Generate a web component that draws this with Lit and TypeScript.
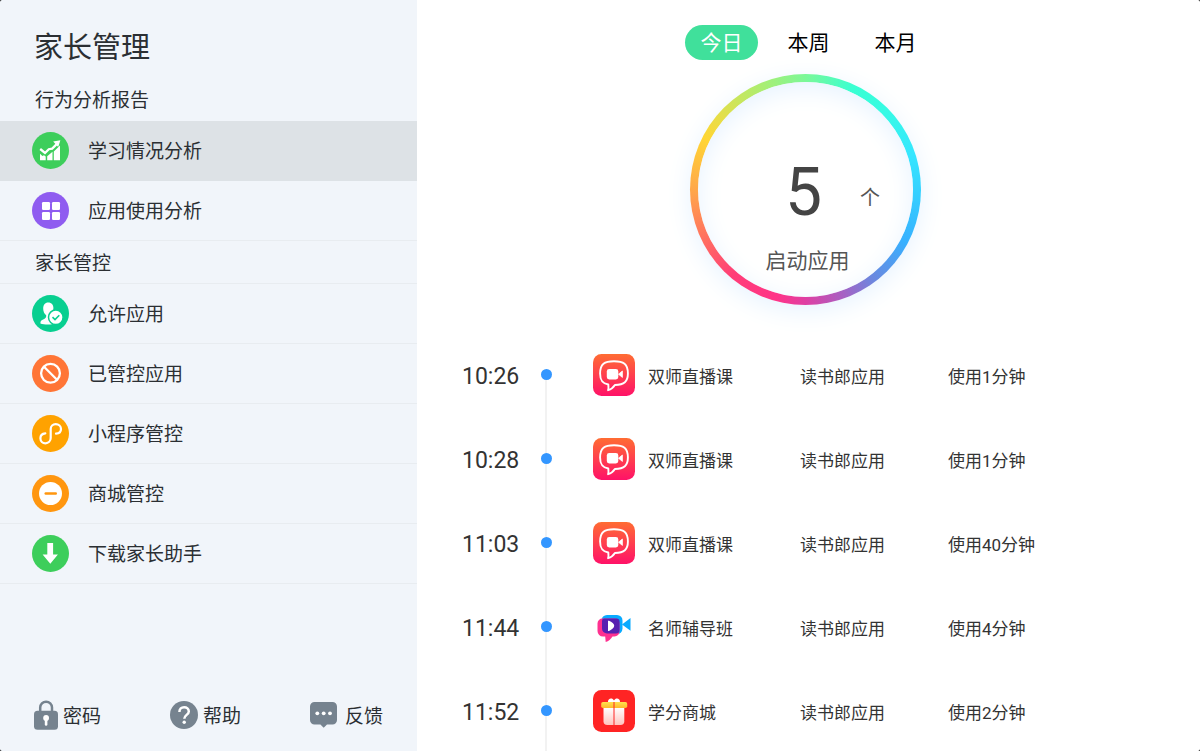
import { LitElement, html, css, svg } from 'lit';
import { customElement, state } from 'lit/decorators.js';
import { classMap } from 'lit/directives/class-map.js';

const menuGlyphs: Record<string, unknown> = {
  study: svg`<circle cx="18.5" cy="18.5" r="18.5" fill="#3dce5b"/>
    <path d="M8 21.8L10.4 24l1.600-.8 1.700 1.400V28.300H8zM15.200 24.200l5.300-4.400V28.300h-5.300zM21.800 19.600l6.200-6V28.300h-6.200z" fill="#fff"/>
    <path d="M8.200 17l4.800 4 3.800-3.800 3.400-.6 5-5" fill="none" stroke="#fff" stroke-width="2.300"/>
    <path d="M21.200 9.600l7.200-1.400-2.200 6.800z" fill="#fff"/>`,
  apps: svg`<circle cx="18.5" cy="18.5" r="18.5" fill="#8f5cf0"/>
    <g fill="#fff"><rect x="10" y="10" width="8" height="8" rx="1.3"/><rect x="20" y="10" width="8" height="8" rx="1.3"/>
    <rect x="10" y="20" width="8" height="8" rx="1.3"/><rect x="20" y="20" width="8" height="8" rx="1.3"/></g>`,
  allow: svg`<circle cx="18.5" cy="18.5" r="18.5" fill="#08cf90"/>
    <path d="M16.2 7.5c3.4 0 5.2 2.3 5.2 5.6 0 2.6-1 4.7-2.4 6 0 2.2.6 2.8 2 3.4V29c-4.200.9-9.500.6-12.600-.6-.3-2.600 1.600-3.800 3.800-4.500 1.500-.5 2.200-1.600 2-3.600-1.900-1.400-3-4.200-3-6.600 0-3.800 1.700-6.200 5-6.200z" fill="#fff"/>
    <circle cx="23.800" cy="22.300" r="7.300" fill="#fff" stroke="#08cf90" stroke-width="1.500"/>
    <path d="M20.500 22.200l2.500 2.400 4.300-4.300" fill="none" stroke="#08cf90" stroke-width="1.600"/>`,
  blocked: svg`<circle cx="18.5" cy="18.5" r="18.5" fill="#ff7536"/>
    <circle cx="18.5" cy="18.300" r="9.400" fill="none" stroke="#fff" stroke-width="2.300"/>
    <path d="M12 11.800l13 13" stroke="#fff" stroke-width="2.300"/>`,
  mini: svg`<circle cx="18.5" cy="18.5" r="18.5" fill="#ffa200"/>
    <path d="M13.300 18.400C10.200 18.700 8.400 20.800 8.400 23.300c0 2.900 2.300 5 5.100 5s5.200-2.200 5.200-5.200v-9.200c0-2.800 2.200-4.800 5-4.800 3 0 5.300 2.100 5.300 4.800 0 2.600-1.900 4.500-5 4.800" fill="none" stroke="#fff" stroke-width="2.200" stroke-linecap="round"/>`,
  mall: svg`<circle cx="18.5" cy="18.5" r="18.5" fill="#ff960f"/>
    <circle cx="18.500" cy="18.500" r="11.500" fill="#fff"/>
    <rect x="12.500" y="17.200" width="12.500" height="2.600" rx="1.200" fill="#ff960f"/>`,
  download: svg`<circle cx="18.5" cy="18.5" r="18.5" fill="#3dce5b"/>
    <path d="M15.300 8h5.800v11.600h4.800l-7.600 9.200-7.700-9.200h4.700z" fill="#fff"/>`,
};

const footGlyphs: Record<string, unknown> = {
  lock: svg`<svg width="24" height="30" viewBox="0 0 24 30" aria-hidden="true">
    <path d="M6.200 12V7.600a5.900 5.900 0 0 1 11.800 0V12" fill="none" stroke="#76838f" stroke-width="2.500"/>
    <rect x="0" y="10.800" width="24" height="19" rx="3.500" fill="#76838f"/>
    <circle cx="12.100" cy="18" r="2.900" fill="#fff"/><path d="M10.800 18h2.600v6.500a1.300 1.300 0 0 1-2.600 0z" fill="#fff"/></svg>`,
  help: svg`<svg width="28" height="28" viewBox="0 0 28 28" aria-hidden="true">
    <circle cx="14" cy="14" r="14" fill="#76838f"/>
    <path d="M9.400 11c0-3 2-4.700 4.700-4.700s4.700 1.700 4.700 4.200c0 3.500-4.500 3.300-4.500 7.200" fill="none" stroke="#fff" stroke-width="2.500"/>
    <circle cx="14.200" cy="21.300" r="1.700" fill="#fff"/></svg>`,
  chat: svg`<svg width="27" height="26" viewBox="0 0 27 26" aria-hidden="true">
    <path d="M4.500 0h18A4.500 4.500 0 0 1 27 4.500v13.500a4.500 4.500 0 0 1-4.500 4.500h-5.500l-3.300 3.300-3.300-3.300H4.500A4.500 4.500 0 0 1 0 18V4.500A4.500 4.500 0 0 1 4.500 0z" fill="#76838f"/>
    <g fill="#fff"><circle cx="7.300" cy="11.300" r="1.900"/><circle cx="13.700" cy="11.300" r="1.900"/><circle cx="20" cy="11.300" r="1.900"/></g></svg>`,
};

const appGlyphs: Record<string, unknown> = {
  live: svg`<defs><linearGradient id="live" x1="0" y1="0" x2="0" y2="1"><stop offset="0" stop-color="#ff6c33"/><stop offset="1" stop-color="#ff1268"/></linearGradient></defs>
    <rect width="42" height="42" rx="8.500" fill="url(#live)"/>
    <path d="M21 7.200c9.500 0 13.900 2.600 13.900 12.300 0 8.200-3.700 11.200-13 11.500-1.500 2.400-4 4.400-6.800 5.200.5-2 .5-3.600.2-5.700C9 29.400 7.100 26 7.100 19.500 7.100 9.800 11.500 7.200 21 7.200z" fill="none" stroke="#fff" stroke-width="1.900" stroke-linejoin="round"/>
    <rect x="13.800" y="15" width="11.500" height="10.400" rx="2.400" fill="#fff"/><path d="M25.500 20.200l3.900-3.200v6.400z" fill="#fff" stroke="#fff" stroke-width=".8" stroke-linejoin="round"/>`,
  tutor: svg`<rect x="8.500" y="9" width="21" height="19" rx="5.500" fill="#08aaff"/>
    <path d="M29 18.500l8.500-6.500v12.700z" fill="#08aaff"/>
    <path d="M9.500 12.500h12.500a4.500 4.500 0 0 1 4.500 4.500v8.500a5 5 0 0 1-5 5h-2c-1.500 2.500-4 4.800-6.800 5.500l-.5-5.500H10a5.500 5.500 0 0 1-5.500-5.500v-7.500a5 5 0 0 1 5-5z" fill="#ff3190"/>
    <path d="M11 12.500h12.500a3 3 0 0 1 3 3v8.500a3.500 3.500 0 0 1-3.500 3.500h-9a5 5 0 0 1-5-5v-7.500a2.500 2.500 0 0 1 2-2.500z" fill="#5720b0"/>
    <path d="M15 14.800h1c3 1.400 5.200 2.800 5.200 5s-2.200 3.700-5.200 5.200h-1z" fill="#fff"/>`,
  gift: svg`<defs><linearGradient id="gift" x1="0" y1="0" x2="0" y2="1"><stop offset="0" stop-color="#fff"/><stop offset="1" stop-color="#ffc4be"/></linearGradient>
    <linearGradient id="lid" x1="0" y1="0" x2="0" y2="1"><stop offset="0" stop-color="#ffe14f"/><stop offset="1" stop-color="#ffb92c"/></linearGradient></defs>
    <rect width="42" height="42" rx="8.500" fill="#ff2424"/>
    <path d="M10.500 17.500h20.800v13.700a3.800 3.800 0 0 1-3.800 3.800H14.300a3.800 3.800 0 0 1-3.800-3.800z" fill="url(#gift)"/>
    <path d="M15 12c-.3-4 4.500-4.700 6-1.500 1.500-3.200 6.300-2.500 6 1.500z" fill="#fff"/>
    <rect x="8.200" y="12" width="26" height="6" rx="1.800" fill="url(#lid)"/>
    <path d="M21 12v23" stroke="#ff2424" stroke-width="1"/>`,
};

const sections = [
  { title: '行为分析报告', items: [['study', '学习情况分析'], ['apps', '应用使用分析']] },
  {
    title: '家长管控',
    items: [['allow', '允许应用'], ['blocked', '已管控应用'], ['mini', '小程序管控'], ['mall', '商城管控'], ['download', '下载家长助手']],
  },
];

const footer = [['lock', '密码'], ['help', '帮助'], ['chat', '反馈']];

const records = [
  { time: '10:26', icon: 'live', name: '双师直播课', minutes: 1 },
  { time: '10:28', icon: 'live', name: '双师直播课', minutes: 1 },
  { time: '11:03', icon: 'live', name: '双师直播课', minutes: 40 },
  { time: '11:44', icon: 'tutor', name: '名师辅导班', minutes: 4 },
  { time: '11:52', icon: 'gift', name: '学分商城', minutes: 2 },
];

const reset = css`
  * { box-sizing: border-box; margin: 0; padding: 0; }
  button { font: inherit; color: inherit; background: none; border: 0; cursor: pointer; }
  svg { display: block; flex: none; }
`;

@customElement('side-menu')
export class SideMenu extends LitElement {
  @state() private selected = 'study';

  static styles = [reset, css`
    :host { display: flex; flex-direction: column; background: #f1f5fa; color: #2b2f33; font-size: 19px; line-height: 28px; }
    .title { padding: 26px 34px 10px; font-size: 29px; font-weight: 400; line-height: 44px; }
    .heading { height: 41px; padding: 7px 35px 0; font-size: 19px; font-weight: 400; line-height: 28px; }
    .heading.ruled { height: 43px; padding-top: 9px; border-bottom: 1px solid #e8ecf0; }
    .item { display: flex; align-items: center; gap: 19px; width: 100%; height: 60px; padding: 0 32px; border-bottom: 1px solid #e8ecf0; text-align: left; }
    .item.selected { background: #dde2e6; border-color: #dde2e6; }
    .label { padding-top: 3px; }
    .foot { display: flex; justify-content: space-between; margin-top: auto; padding: 0 34px 20px; }
    .tool { display: flex; align-items: center; gap: 5px; height: 32px; }
    .tool.chat { gap: 8px; }
  `];

  render() {
    return html`
      <h1 class="title">家长管理</h1>
      <nav>
        ${sections.map((section, i) => html`
          <h2 class=${classMap({ heading: true, ruled: i > 0 })}>${section.title}</h2>
          ${section.items.map(([id, label]) => html`
            <button class=${classMap({ item: true, selected: id === this.selected })} @click=${() => (this.selected = id)}>
              <svg width="37" height="37" viewBox="0 0 37 37" aria-hidden="true">${menuGlyphs[id]}</svg>
              <span class="label">${label}</span>
            </button>`)}
        `)}
      </nav>
      <div class="foot">
        ${footer.map(([id, label]) => html`<button class="tool ${id}">${footGlyphs[id]}<span class="label">${label}</span></button>`)}
      </div>
    `;
  }
}

@customElement('usage-report')
export class UsageReport extends LitElement {
  @state() private range = '今日';

  static styles = [reset, css`
    :host { display: flex; flex-direction: column; align-items: center; background: #fff; color: #333; overflow: hidden; }
    .tabs { display: flex; gap: 14px; flex: none; padding-top: 25px; }
    .tab { width: 73px; height: 35px; padding-top: 2px; border-radius: 18px; font-size: 21px; line-height: 33px; color: #000; }
    .tab.active { background: #40e09b; color: #fff; }
    .ring {
      flex: none; width: 231px; height: 231px; margin-top: 14px; padding: 8px; border-radius: 50%;
      margin-right: 6px;
      background: conic-gradient(#7bf898 0deg, #39ffd2 25deg, #36fbe4 45deg, #35e6ff 72deg, #35ccff 95deg, #37b0ff 118deg,
        #6b87df 143deg, #a661c4 160deg, #df3fa3 180deg, #ff3488 195deg, #ff3d78 220deg, #ff6b62 242deg,
        #ffa44c 268deg, #ffd634 297deg, #e2df4c 312deg, #b5eb6a 332deg, #7bf898 360deg);
      box-shadow: 0 6px 26px #e7f3ff;
    }
    .disc {
      display: flex; flex-direction: column; align-items: center; height: 100%; padding: 73px 4px 0 0;
      border-radius: 50%; background: #fff; box-shadow: inset 0 6px 26px #e7f3ff; color: #555;
    }
    .count { display: grid; grid-template-columns: 1fr auto 1fr; align-items: center; width: 100%; height: 76px; }
    .number { grid-column: 2; font-size: 66px; line-height: 76px; color: #444; }
    .unit { padding: 10px 0 0 38px; font-size: 20px; line-height: 28px; }
    .caption { margin-top: 15px; padding-left: 8px; font-size: 21px; line-height: 30px; }
    .list { width: 100%; margin-top: 28px; padding-left: 45px; list-style: none; }
    .row {
      display: grid; grid-template-columns: 73px 22px 78px 165fr 148fr 252fr; align-items: center;
      height: 84px; font-size: 17px; line-height: 26px;
    }
    .time { padding-top: 4px; font-size: 23px; line-height: 32px; }
    .rail {
      display: flex; align-items: center; justify-content: center; align-self: stretch; padding-bottom: 2px;
      background: linear-gradient(#f2f2f2, #f2f2f2) center bottom / 2px 100% no-repeat;
    }
    .row:first-child .rail { background-size: 2px 50%; }
    .dot { width: 11px; height: 11px; border-radius: 50%; background: #3396ff; }
    .logo { justify-self: end; }
    .cell { padding-top: 3px; }
    .name { padding-left: 13px; }
  `];

  render() {
    return html`
      <div class="tabs" role="tablist">
        ${['今日', '本周', '本月'].map((label) => html`
          <button role="tab" aria-selected=${label === this.range} class=${classMap({ tab: true, active: label === this.range })}
            @click=${() => (this.range = label)}>${label}</button>`)}
      </div>
      <div class="ring">
        <div class="disc">
          <div class="count"><span class="number">${records.length}</span><span class="unit">个</span></div>
          <p class="caption">启动应用</p>
        </div>
      </div>
      <ol class="list">
        ${records.map((r) => html`
          <li class="row">
            <time class="time">${r.time}</time>
            <span class="rail"><i class="dot"></i></span>
            <svg class="logo" width="42" height="42" viewBox="0 0 42 42" aria-hidden="true">${appGlyphs[r.icon]}</svg>
            <span class="cell name">${r.name}</span>
            <span class="cell">读书郎应用</span>
            <span class="cell">使用${r.minutes}分钟</span>
          </li>`)}
      </ol>
    `;
  }
}

@customElement('app-root')
export class AppRoot extends LitElement {
  static styles = css`
    :host { display: block; height: 100vh; background: #000; font-family: Roboto, "Noto Sans CJK SC", sans-serif; }
    .layout { display: grid; grid-template-columns: 34.75% 1fr; grid-template-rows: 100%; height: 100%; border-radius: 2px; overflow: hidden; }
  `;

  render() {
    return html`<div class="layout"><side-menu></side-menu><usage-report></usage-report></div>`;
  }
}
